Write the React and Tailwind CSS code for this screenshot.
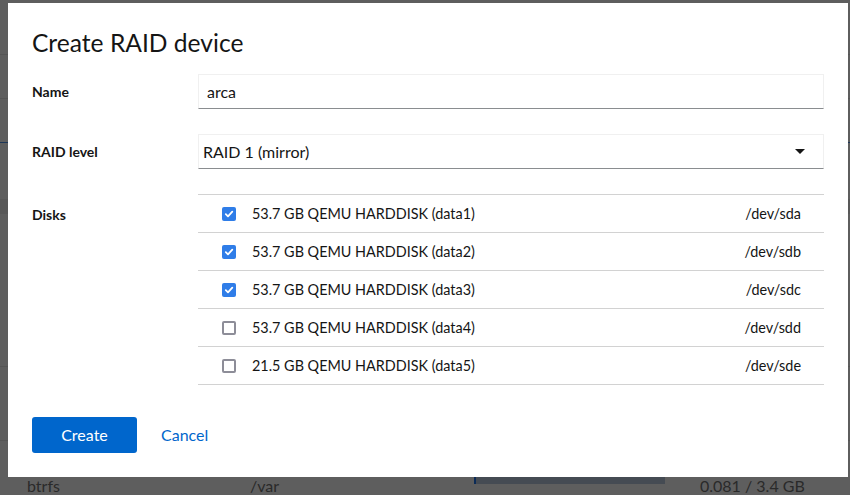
import React from "react";

const FONT = { fontFamily: "Lato, 'Open Sans', 'Noto Sans', sans-serif" };

const DISKS = [
  { size: "53.7 GB", name: "data1", dev: "/dev/sda", checked: true },
  { size: "53.7 GB", name: "data2", dev: "/dev/sdb", checked: true },
  { size: "53.7 GB", name: "data3", dev: "/dev/sdc", checked: true },
  { size: "53.7 GB", name: "data4", dev: "/dev/sdd", checked: false },
  { size: "21.5 GB", name: "data5", dev: "/dev/sde", checked: false },
];

function Box({ checked }) {
  if (checked) {
    return (
      <span className="flex h-[14px] w-[14px] shrink-0 items-center justify-center rounded-[2px] bg-[#2f7de8]">
        <svg width="10" height="10" viewBox="0 0 10 10" fill="none">
          <path d="M1.8 5.2 4 7.3 8.3 2.6" stroke="#fff" strokeWidth="1.8" strokeLinecap="round" strokeLinejoin="round" />
        </svg>
      </span>
    );
  }
  return <span className="h-[14px] w-[14px] shrink-0 rounded-[2px] border-2 border-[#8d8d98] bg-white" />;
}

// Page behind the dimmed backdrop — only its edges show around the modal.
function BackPage() {
  return (
    <div className="flex flex-col text-[16px] text-[#2a2a2a]" style={FONT}>
      <div className="h-[55px] border-b border-[#555]" />
      <div className="h-[44px] border-b border-[#555]" />
      <div className="h-[44px] border-b border-[#1d3657]" />
      <div className="h-[56px]" />
      <div className="h-[15px] bg-[#585858]" />
      <div className="h-[153px] border-b border-[#555]" />
      <div className="h-[74px] border-b border-[#555]" />
      <div className="flex items-start pl-[27px] pt-[33px]">
        <span className="w-[223px]">btrfs</span>
        <span className="w-[224px]">/var</span>
        <span className="mt-[1px] h-[9px] w-[191px] border-l-2 border-[#0b2b57] bg-[#454b53]" />
        <span className="ml-[35px]">0.081 / 3.4 GB</span>
      </div>
    </div>
  );
}

export default function App() {
  return (
    <div className="relative h-[495px] w-[850px] overflow-hidden bg-[#5e5e5e]">
      <BackPage />

      <div
        className="absolute left-[8px] top-[3px] flex h-[474px] w-[840px] flex-col bg-white px-6 pt-[24px] text-[#151515]"
        style={FONT}
      >
        <h1 className="text-[24.6px] font-normal leading-[31px]">Create RAID device</h1>

        <div className="mt-[16px] grid grid-cols-[166px_1fr] items-center gap-y-[25px]">
          <label className="text-[14px] font-bold">Name</label>
          <div className="flex h-[35px] items-center border border-[#f0f0f0] border-b-[#8a8d90] px-2 text-[16px]">
            arca
          </div>

          <label className="text-[14px] font-bold">RAID level</label>
          <div className="flex h-[35px] items-center justify-between border border-[#f0f0f0] border-b-[#8a8d90] pl-[4px] pr-[18px] text-[16px]">
            <span>RAID 1 (mirror)</span>
            <svg width="10" height="5" viewBox="0 0 10 5">
              <path d="M0 0h10L5 5z" fill="#151515" />
            </svg>
          </div>

          <label className="self-start pt-[10px] text-[14px] font-bold">Disks</label>
          <div className="border-t border-[#d2d2d2]">
            {DISKS.map((d) => (
              <div
                key={d.dev}
                className="flex h-[38px] items-center border-b border-[#d2d2d2] pl-6 pr-[23px] text-[14.4px]"
              >
                <Box checked={d.checked} />
                <span className="ml-4 flex-1">
                  {d.size} QEMU HARDDISK ({d.name})
                </span>
                <span>{d.dev}</span>
              </div>
            ))}
          </div>
        </div>

        <div className="mt-[32px] flex items-center gap-6">
          <button className="h-[36px] w-[105px] rounded-[3px] bg-[#0066cc] text-[16px] text-white">
            Create
          </button>
          <button className="text-[16px] text-[#0066cc]">Cancel</button>
        </div>
      </div>
    </div>
  );
}
